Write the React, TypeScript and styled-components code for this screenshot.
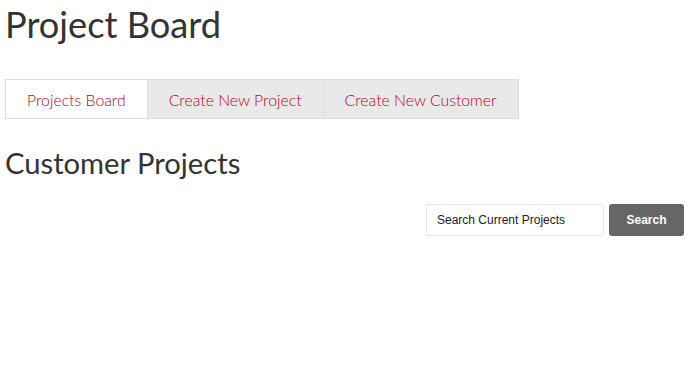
import React, { useState } from 'react';
import styled, { createGlobalStyle } from 'styled-components';

const tabs = ['Projects Board', 'Create New Project', 'Create New Customer'];

export default function App(): JSX.Element {
  const [active, setActive] = useState(0);
  const [query, setQuery] = useState('');

  return (
    <>
      <GlobalStyle />
      <StyledPage>
        <StyledTitle>Project Board</StyledTitle>
        <StyledTabs>
          {tabs.map((tab, i) => (
            <StyledTab key={tab} $active={i === active} onClick={() => setActive(i)}>
              {tab}
            </StyledTab>
          ))}
        </StyledTabs>
        <StyledSubtitle>Customer Projects</StyledSubtitle>
        <StyledSearchRow>
          <StyledInput
            type="search"
            placeholder="Search Current Projects"
            value={query}
            onChange={(e) => setQuery(e.target.value)}
          />
          <StyledButton type="submit">Search</StyledButton>
        </StyledSearchRow>
      </StyledPage>
    </>
  );
}

const GlobalStyle = createGlobalStyle`
  body {
    margin: 0;
    background: #fff;
    font-family: Lato, 'Liberation Sans', sans-serif;
    color: #333;
  }
`;

const StyledPage = styled.div`
  padding: 0 7px 0 5px;
`;

const StyledTitle = styled.h1`
  margin: 0;
  padding-top: 2px;
  font-size: 36.2px;
  font-weight: 400;
  line-height: 44px;
  color: #333;
`;

const StyledTabs = styled.div`
  display: flex;
  width: max-content;
  margin-top: 33px;
  border: 1px solid #ddd;
`;

const StyledTab = styled.div<{ $active: boolean }>`
  height: 38px;
  padding: 0 21px;
  display: flex;
  align-items: center;
  font-size: 15.8px;
  font-weight: 300;
  color: #c0001f;
  background: ${(p) => (p.$active ? '#fff' : '#e9e9e9')};
  cursor: pointer;

  & + & {
    border-left: 1px solid #ddd;
  }
`;

const StyledSubtitle = styled.h2`
  margin: 27px 0 0;
  font-size: 29.2px;
  font-weight: 400;
  line-height: 34px;
  color: #333;
`;

const StyledSearchRow = styled.div`
  display: flex;
  justify-content: flex-end;
  gap: 5px;
  margin-top: 24px;
`;

const StyledInput = styled.input`
  width: 178px;
  height: 32px;
  box-sizing: border-box;
  padding: 0 10px;
  border: 1px solid #e3e3e3;
  border-radius: 3px;
  font-family: 'Liberation Sans', Arial, sans-serif;
  font-size: 12px;
  outline: none;

  &::placeholder {
    color: #222;
  }
`;

const StyledButton = styled.button`
  width: 75px;
  height: 32px;
  border: none;
  border-radius: 3px;
  background: #666;
  color: #fff;
  font-family: 'Liberation Sans', Arial, sans-serif;
  font-size: 12px;
  font-weight: 700;
  cursor: pointer;
`;
